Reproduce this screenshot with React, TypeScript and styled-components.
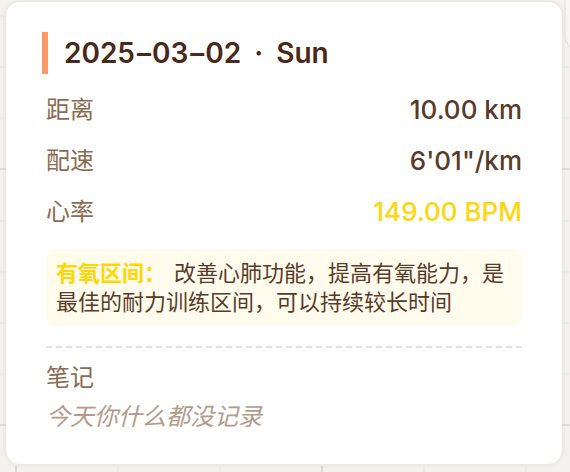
import React from "react";
import styled, { createGlobalStyle } from "styled-components";

const GlobalStyle = createGlobalStyle`
  * {
    box-sizing: border-box;
  }
  body {
    margin: 0;
    background: #f3f2ee;
    font-family: Inter, "Noto Sans CJK SC", sans-serif;
    color: #5a3a29;
  }
`;

const Page = styled.main`
  position: relative;
  min-height: 100vh;
  padding: 2px 8px 8px 6px;
  overflow: hidden;
`;

const ChartGrid = styled.svg`
  position: absolute;
  inset: 0;
  width: 100%;
  height: 100%;
`;

const Card = styled.article`
  position: relative;
  padding: 30px 40px 29px;
  border-radius: 14px;
  background: #ffffff;
  box-shadow: 0 0 4px 2px rgba(139, 107, 82, 0.08);
`;

const Title = styled.h1`
  margin: 0 0 10px -4px;
  padding-left: 16px;
  border-left: 6px solid #ff9966;
  color: #4a2918;
  font-size: 28px;
  font-weight: 600;
  line-height: 42px;
`;

const Dash = styled.span`
  margin: 0 1px 0 2px;
`;

const Dot = styled.span`
  margin: 0 6px;
`;

const Stats = styled.dl`
  margin: 0;
`;

const Stat = styled.div`
  display: flex;
  justify-content: space-between;
  align-items: center;
  height: 51px;
`;

const Label = styled.dt`
  color: #8b6b52;
  font-size: 24px;
  line-height: 36px;
`;

const Value = styled.dd<{ $highlight?: boolean }>`
  margin: 0;
  color: ${({ $highlight }) => ($highlight ? "#ffd60a" : "#5a3a29")};
  font-size: 26px;
  font-weight: 500;
  line-height: 36px;
`;

const Zone = styled.p`
  margin: 12px 0 0;
  padding: 10px 10px 9px;
  border-radius: 8px;
  background: #fffcee;
  font-size: 22px;
  line-height: 29px;
`;

const ZoneName = styled.strong`
  margin-right: 8px;
  color: #ffd60a;
  font-weight: 700;
`;

const Notes = styled.section`
  margin-top: 20px;
  padding-top: 12px;
  border-top: 2px dashed #e5e0dc;
`;

const NotesTitle = styled.h2`
  margin: 0;
  color: #8b6b52;
  font-size: 24px;
  font-weight: 400;
  line-height: 36px;
`;

const NotesText = styled.p`
  margin: 3px 0 0;
  color: #b39b89;
  font-size: 24px;
  font-style: italic;
  line-height: 36px;
`;

const stats = [
  { label: "距离", value: "10.00 km" },
  { label: "配速", value: "6'01\"/km" },
  { label: "心率", value: "149.00 BPM", highlight: true },
];

export default function App() {
  return (
    <>
      <GlobalStyle />
      <Page>
        <ChartGrid aria-hidden="true">
          {[16, 67, 118, 221, 272, 323, 374].map((y) => (
            <line key={y} x1="0" x2="100%" y1={y} y2={y} stroke="#eae9e5" />
          ))}
          {[169, 425].map((y) => (
            <line key={y} x1="0" x2="100%" y1={y} y2={y} stroke="#dddcd8" strokeWidth="2" />
          ))}
          {[118, 220, 424, 526].map((x) => (
            <line key={x} x1={x} x2={x} y1="466" y2="100%" stroke="#e6e5e1" />
          ))}
          {[16, 322].map((x) => (
            <line key={x} x1={x} x2={x} y1="466" y2="100%" stroke="#d9d8d4" strokeWidth="2" />
          ))}
          <rect x="565" y="-20" width="80" height="70" rx="14" fill="#f7f6f2" stroke="#e5e1d8" />
        </ChartGrid>
        <Card>
          <Title>
            2025<Dash>–</Dash>03<Dash>–</Dash>02 <Dot>·</Dot> Sun
          </Title>
          <Stats>
            {stats.map(({ label, value, highlight }) => (
              <Stat key={label}>
                <Label>{label}</Label>
                <Value $highlight={highlight}>{value}</Value>
              </Stat>
            ))}
          </Stats>
          <Zone>
            <ZoneName>有氧区间：</ZoneName>
            改善心肺功能，提高有氧能力，是最佳的耐力训练区间，可以持续较长时间
          </Zone>
          <Notes>
            <NotesTitle>笔记</NotesTitle>
            <NotesText>今天你什么都没记录</NotesText>
          </Notes>
        </Card>
      </Page>
    </>
  );
}
